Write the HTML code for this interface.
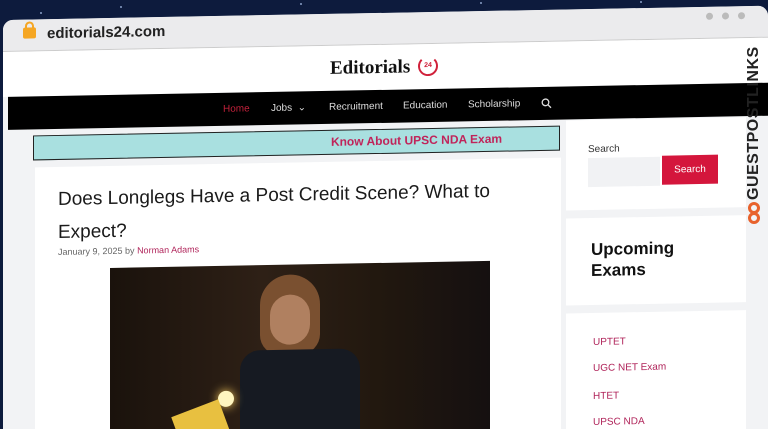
<!DOCTYPE html>
<html><head><meta charset="utf-8"><style>
*{margin:0;padding:0;box-sizing:border-box}
html,body{width:768px;height:429px;overflow:hidden}
body{background:#0d1b3d;font-family:"Liberation Sans",sans-serif;position:relative}
#clip{position:absolute;left:0;top:0;width:768px;height:429px;overflow:hidden}
.star{position:absolute;width:2px;height:2px;background:#8aa0c8;border-radius:50%}
#w{position:absolute;left:3px;top:20px;width:765px;height:430px;background:#f2f3f5;border-radius:10px 10px 0 0;transform:skewY(-1.07deg);transform-origin:0 0;overflow:hidden}
.a{position:absolute}
#bar{left:0;top:0;width:765px;height:32px;background:#ebebed;border-bottom:1px solid #ccc}
#head{left:0;top:32px;width:765px;height:45px;background:#fff}
#nav{left:5px;top:77px;width:760px;height:33px;background:#000}
.ni{position:absolute;top:11px;font-size:10px;color:#ddd}
.card{position:absolute;background:#fff}
.li{position:absolute;left:27px;font-size:10px;color:#b0245a}
</style></head><body>
<div id="clip">
<div class="star" style="left:120px;top:6px"></div><div class="star" style="left:300px;top:3px"></div><div class="star" style="left:480px;top:2px"></div><div class="star" style="left:640px;top:1px"></div><div class="star" style="left:40px;top:12px"></div>
<div id="w">
 <div id="bar" class="a">
  <div class="a" style="left:20px;top:8px;width:13px;height:11px;background:#f5a623;border-radius:2px"></div>
  <div class="a" style="left:22px;top:2px;width:9px;height:9px;border:2px solid #f5a623;border-bottom:none;border-radius:5px 5px 0 0"></div>
  <div class="a" style="left:44px;top:6px;font-size:15px;font-weight:bold;color:#222">editorials24.com</div>
  <div class="a" style="left:703px;top:6px;width:7px;height:7px;border-radius:50%;background:#bbb"></div>
  <div class="a" style="left:719px;top:6px;width:7px;height:7px;border-radius:50%;background:#bbb"></div>
  <div class="a" style="left:735px;top:6px;width:7px;height:7px;border-radius:50%;background:#bbb"></div>
 </div>
 <div id="head" class="a">
  <div class="a" style="left:327px;top:12px;font-family:'Liberation Serif',serif;font-weight:bold;font-size:19px;color:#111">Editorials</div>
  <div class="a" style="left:415px;top:12px;width:20px;height:20px;border:2px solid #d0203a;border-radius:50%;border-top-color:transparent;font-size:7px;color:#d0203a;font-weight:bold;text-align:center;line-height:16px">24</div>
 </div>
 <div id="nav" class="a">
  <div class="ni" style="left:215px;color:#c0203a">Home</div>
  <div class="ni" style="left:263px">Jobs &nbsp;⌄</div>
  <div class="ni" style="left:321px">Recruitment</div>
  <div class="ni" style="left:395px">Education</div>
  <div class="ni" style="left:460px">Scholarship</div>
  <svg class="a" style="left:533px;top:11px" width="11" height="11" viewBox="0 0 11 11"><circle cx="4.5" cy="4.5" r="3.3" fill="none" stroke="#ddd" stroke-width="1.3"/><line x1="7" y1="7" x2="10" y2="10" stroke="#ddd" stroke-width="1.3"/></svg>
 </div>
 <div class="a" style="left:30px;top:116px;width:527px;height:25px;background:#a9e0e0;border:1.5px solid #222;text-align:center;font-size:12px;font-weight:bold;color:#c0245a;line-height:22px;padding-left:240px">Know About UPSC NDA Exam</div>
 <div class="card" style="left:32px;top:148px;width:526px;height:282px">
  <div class="a" style="left:23px;top:16px;font-size:19px;color:#1a1a1a;line-height:33px;width:480px">Does Longlegs Have a Post Credit Scene? What to Expect?</div>
  <div class="a" style="left:23px;top:80px;font-size:9px;color:#666">January 9, 2025 by <span style="color:#b0245a">Norman Adams</span></div>
  <div class="a" style="left:75px;top:102px;width:380px;height:180px;background:linear-gradient(90deg,#1a120c,#2e2016 40%,#22180f 70%,#151010);overflow:hidden">
   <div class="a" style="left:150px;top:10px;width:60px;height:80px;background:#7a5030;border-radius:30px 30px 20px 20px"></div>
   <div class="a" style="left:160px;top:30px;width:40px;height:50px;background:#b08060;border-radius:20px"></div>
   <div class="a" style="left:130px;top:85px;width:120px;height:120px;background:#161a22;border-radius:20px 20px 0 0"></div>
   <div class="a" style="left:108px;top:125px;width:16px;height:16px;background:#fff6c0;border-radius:50%;box-shadow:0 0 10px #ffd060"></div>
   <div class="a" style="left:70px;top:140px;width:50px;height:60px;background:#e8c040;transform:rotate(-20deg)"></div>
  </div>
 </div>
 <div class="card" style="left:563px;top:111px;width:180px;height:90px">
  <div class="a" style="left:22px;top:24px;font-size:10px;color:#333">Search</div>
  <div class="a" style="left:22px;top:38px;width:72px;height:29px;background:#f1f2f4"></div>
  <div class="a" style="left:96px;top:37px;width:56px;height:29px;background:#d4163c;color:#fff;font-size:10px;text-align:center;line-height:29px">Search</div>
 </div>
 <div class="card" style="left:563px;top:209px;width:180px;height:87px">
  <div class="a" style="left:25px;top:21px;font-size:17px;font-weight:bold;color:#111;line-height:21px">Upcoming<br>Exams</div>
 </div>
 <div class="card" style="left:563px;top:304px;width:180px;height:126px">
  <div class="li" style="top:24px">UPTET</div>
  <div class="li" style="top:50px">UGC NET Exam</div>
  <div class="li" style="top:78px">HTET</div>
  <div class="li" style="top:104px">UPSC NDA</div>
 </div>
</div>
<div style="position:absolute;left:745px;top:200px;transform:rotate(-90deg);transform-origin:0 0;font-size:16px;font-weight:bold;color:#222;letter-spacing:0.5px;white-space:nowrap">GUESTPOSTLINKS</div>
<div style="position:absolute;left:748px;top:202px;width:12px;height:12px;border:3px solid #e8622c;border-radius:6px"></div>
<div style="position:absolute;left:748px;top:212px;width:12px;height:12px;border:3px solid #e8622c;border-radius:6px"></div>
</div>
</body></html>
